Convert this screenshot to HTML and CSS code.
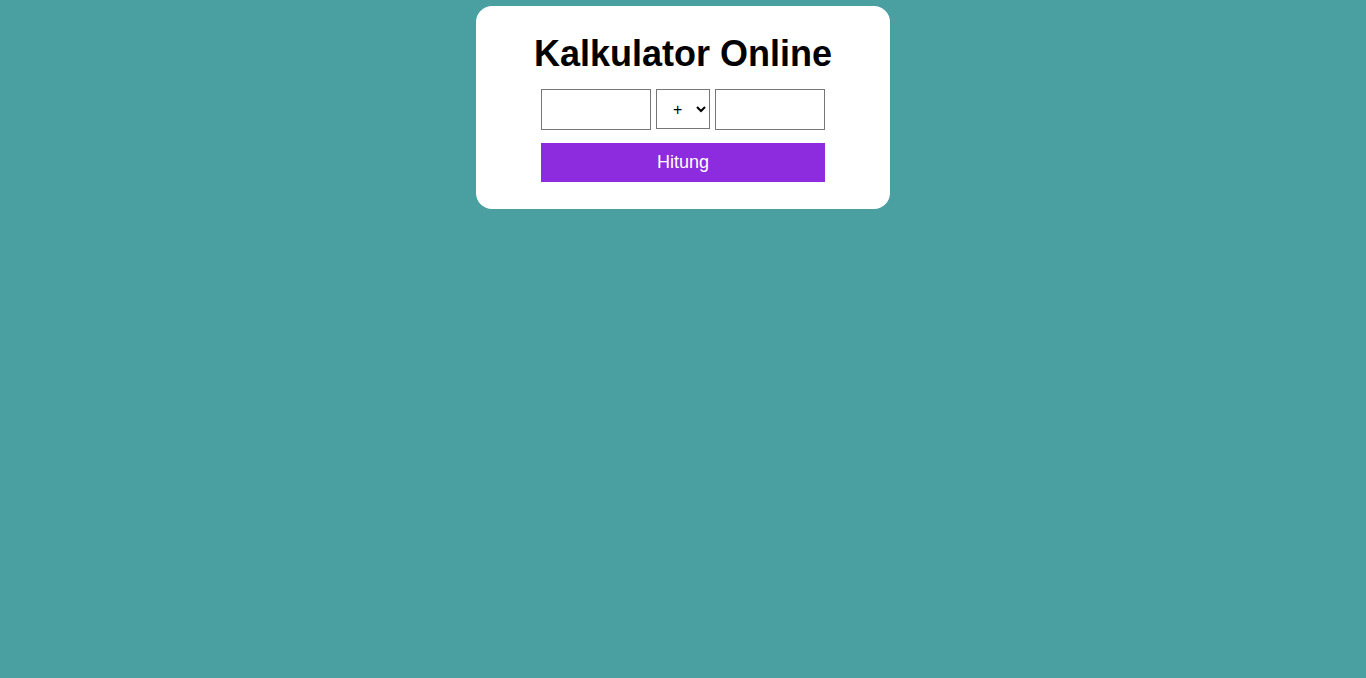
FILE: index.html
```html
<!DOCTYPE html>
<html lang="id">
<head>
<meta charset="utf-8">
<title>Kalkulator Online</title>
<link rel="stylesheet" href="styles.css">
</head>
<body>
<div class="card">
  <h1 class="title">Kalkulator Online</h1>
  <div class="row">
    <input class="num" type="text">
    <select class="op">
      <option>+</option>
      <option>-</option>
      <option>*</option>
      <option>/</option>
    </select>
    <input class="num" type="text">
  </div>
  <button class="btn">Hitung</button>
</div>
</body>
</html>
```

FILE: styles.css
```css
html, body {
  margin: 0;
  padding: 0;
}
body {
  background: #4a9fa1;
  font-family: "Liberation Sans", Arial, sans-serif;
  padding-top: 6px;
  min-height: 672px;
}
.card {
  width: 414px;
  box-sizing: border-box;
  margin: 0 auto;
  background: #ffffff;
  border-radius: 16px;
  padding: 27px 65px;
  display: flex;
  flex-direction: column;
  align-items: center;
}
.title {
  margin: 0 0 15px;
  font-size: 36px;
  font-weight: bold;
  color: #000;
  line-height: 41px;
  white-space: nowrap;
}
.row {
  display: flex;
  gap: 5px;
  align-items: flex-start;
  width: 284px;
}
.num {
  width: 110px;
  height: 41px;
  box-sizing: border-box;
  border: 1px solid #767676;
  margin: 0;
  padding: 2px 4px;
  font-size: 16px;
  font-family: "Liberation Sans", Arial, sans-serif;
}
.op {
  width: 54px;
  height: 40px;
  box-sizing: border-box;
  border: 1px solid #767676;
  border-radius: 0;
  margin: 0;
  padding: 0 0 0 12px;
  font-size: 16px;
  font-family: "Liberation Sans", Arial, sans-serif;
  background: #fff;
  color: #000;
}
.btn {
  margin-top: 13px;
  width: 284px;
  height: 39px;
  border: none;
  background: #8d2bdf;
  color: #ffffff;
  font-size: 18px;
  font-family: "Liberation Sans", Arial, sans-serif;
  padding: 0;
}
```
